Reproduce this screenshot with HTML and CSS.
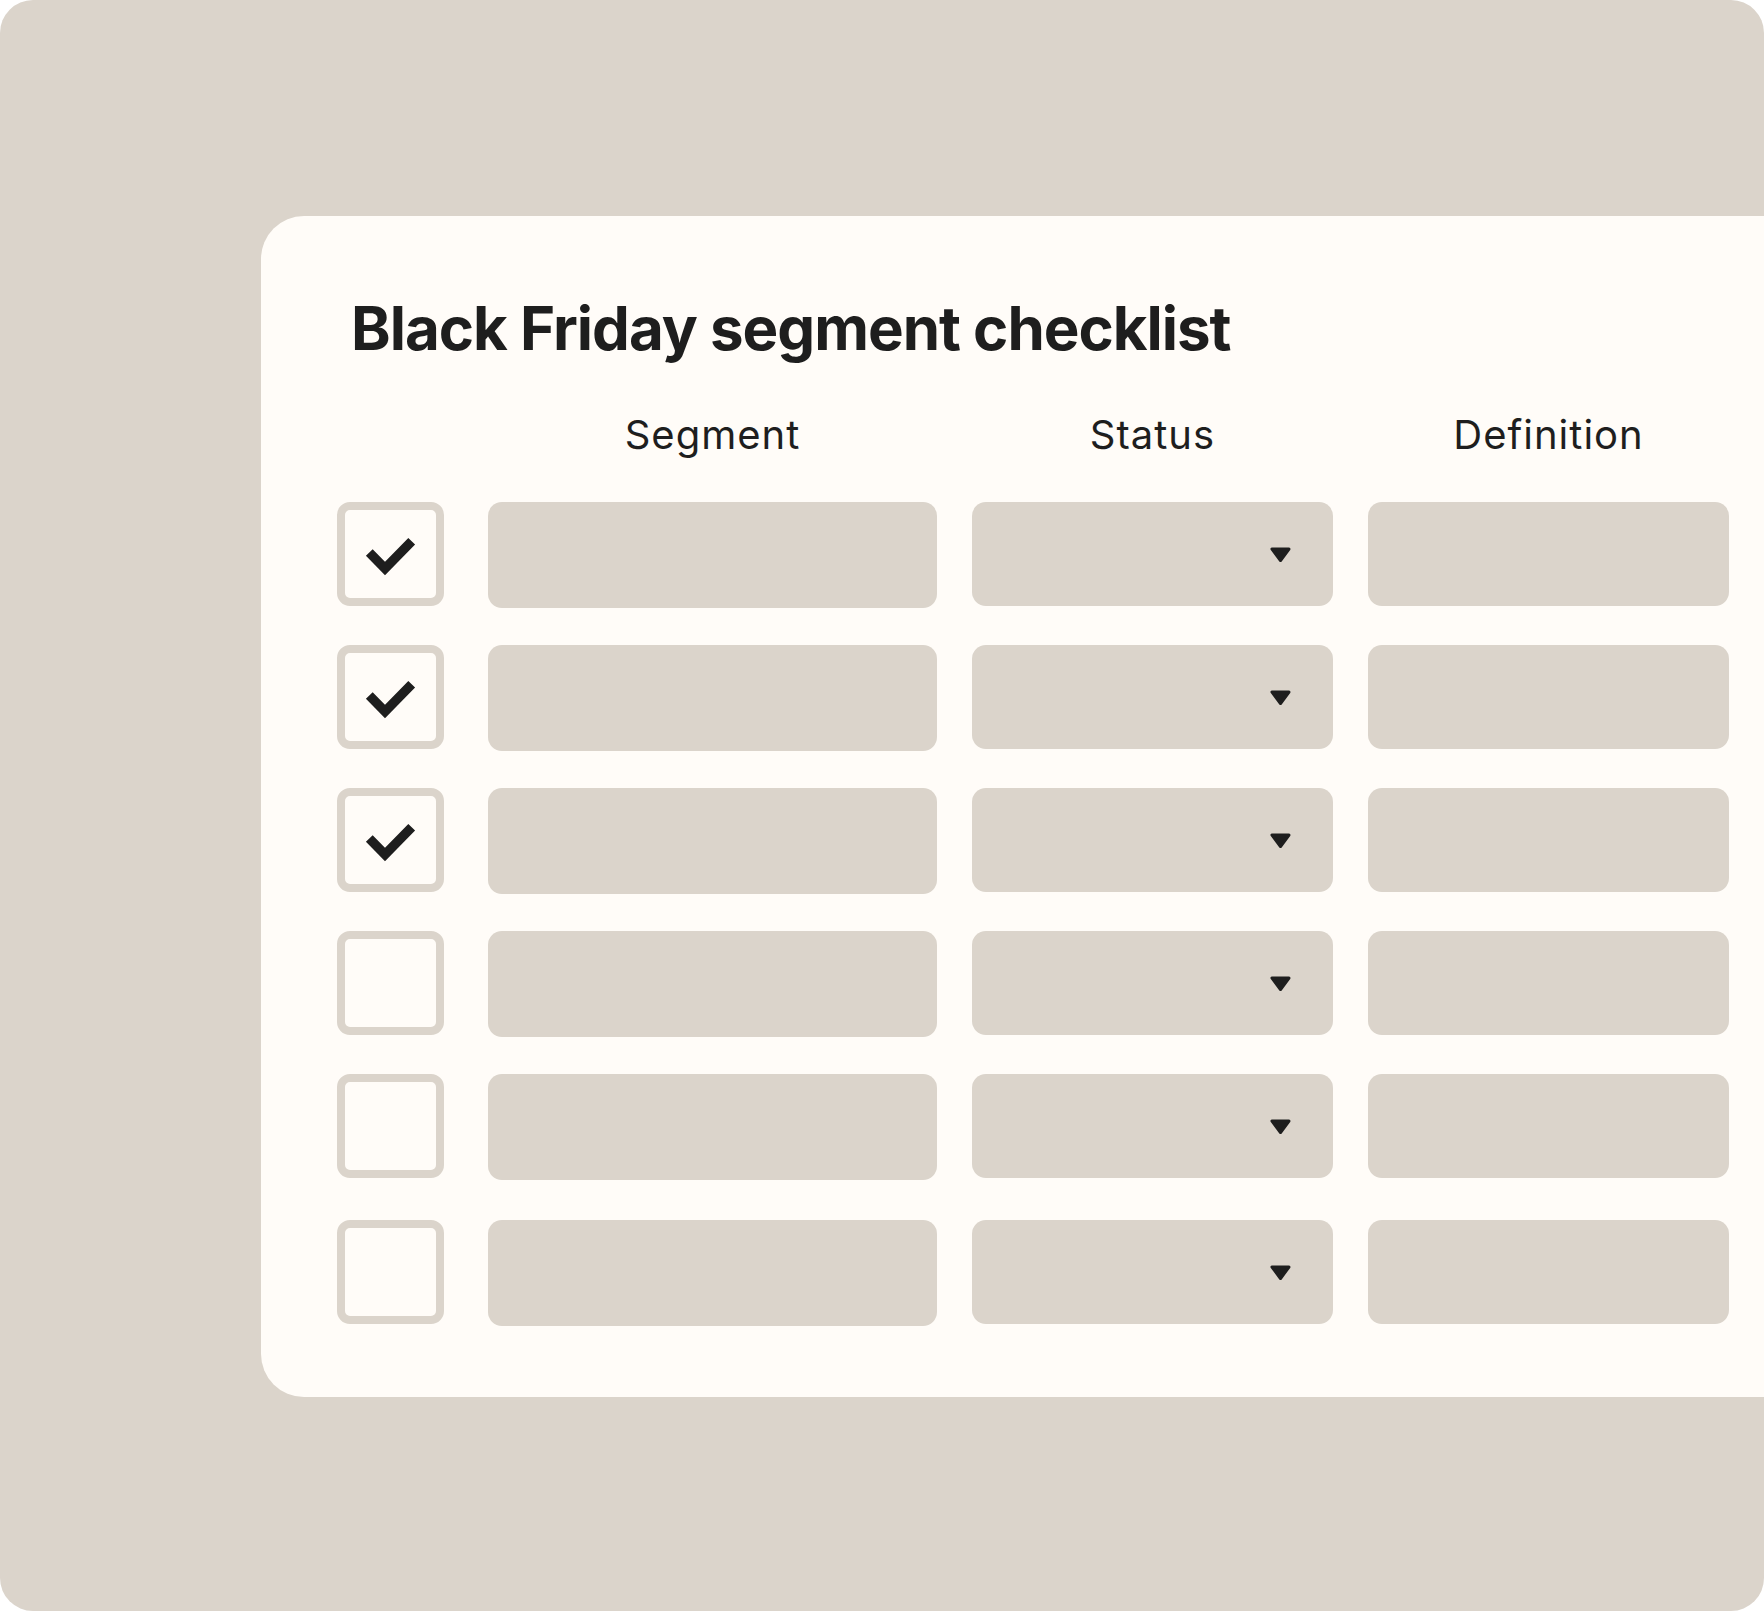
FILE: index.html
```html
<!DOCTYPE html>
<html lang="en">
<head>
<meta charset="utf-8">
<title>Black Friday segment checklist</title>
<link rel="stylesheet" href="styles.css">
</head>
<body>
<div class="frame">
  <section class="card">
    <h1 class="title">Black Friday segment checklist</h1>
    <div class="grid head">
      <div></div>
      <div class="col-label">Segment</div>
      <div class="col-label">Status</div>
      <div class="col-label">Definition</div>
    </div>
    <div class="rows">
      <div class="grid row">
        <div class="check"><svg viewBox="0 0 91 88" width="91" height="88"><path d="M24.3 42.5 L40 58.5 L66.7 31.2" /></svg></div>
        <div class="field field-seg"></div>
        <div class="field select"><svg viewBox="0 0 23 17" width="23" height="17"><polygon points="3,3 20,3 11.5,14.5" /></svg></div>
        <div class="field"></div>
      </div>
      <div class="grid row">
        <div class="check"><svg viewBox="0 0 91 88" width="91" height="88"><path d="M24.3 42.5 L40 58.5 L66.7 31.2" /></svg></div>
        <div class="field field-seg"></div>
        <div class="field select"><svg viewBox="0 0 23 17" width="23" height="17"><polygon points="3,3 20,3 11.5,14.5" /></svg></div>
        <div class="field"></div>
      </div>
      <div class="grid row">
        <div class="check"><svg viewBox="0 0 91 88" width="91" height="88"><path d="M24.3 42.5 L40 58.5 L66.7 31.2" /></svg></div>
        <div class="field field-seg"></div>
        <div class="field select"><svg viewBox="0 0 23 17" width="23" height="17"><polygon points="3,3 20,3 11.5,14.5" /></svg></div>
        <div class="field"></div>
      </div>
      <div class="grid row">
        <div class="check"></div>
        <div class="field field-seg"></div>
        <div class="field select"><svg viewBox="0 0 23 17" width="23" height="17"><polygon points="3,3 20,3 11.5,14.5" /></svg></div>
        <div class="field"></div>
      </div>
      <div class="grid row">
        <div class="check"></div>
        <div class="field field-seg"></div>
        <div class="field select"><svg viewBox="0 0 23 17" width="23" height="17"><polygon points="3,3 20,3 11.5,14.5" /></svg></div>
        <div class="field"></div>
      </div>
      <div class="grid row row-last">
        <div class="check"></div>
        <div class="field field-seg"></div>
        <div class="field select"><svg viewBox="0 0 23 17" width="23" height="17"><polygon points="3,3 20,3 11.5,14.5" /></svg></div>
        <div class="field"></div>
      </div>
    </div>
  </section>
</div>
</body>
</html>
```

FILE: styles.css
```css
* { box-sizing: border-box; }

html, body {
  margin: 0;
  padding: 0;
  background: #ffffff;
}

body {
  font-family: Inter, "Noto Sans", "Liberation Sans", sans-serif;
  color: #1e1e1e;
}

.frame {
  width: 1764px;
  height: 1611px;
  background: #dbd4cb;
  border-radius: 33px;
  padding: 216px 0 0 261px;
  overflow: hidden;
}

.card {
  background: #fffcf8;
  border-radius: 43px 0 0 43px;
  height: 1181px;
  padding: 82px 0 0 76px;
  display: flex;
  flex-direction: column;
}

.title {
  margin: 0 0 0 14px;
  font-size: 60px;
  line-height: 60px;
  font-weight: 700;
  letter-spacing: -0.017em;
  color: #1e1e1e;
}

.grid {
  display: grid;
  grid-template-columns: 116px 449px 361px 361px;
  column-gap: 35px;
}

.head {
  margin-top: 57px;
  height: 40px;
}

.col-label {
  font-size: 40px;
  line-height: 40px;
  font-weight: 400;
  letter-spacing: 1px;
  text-align: center;
  color: #1e1e1e;
}

.rows {
  margin-top: 47px;
  display: flex;
  flex-direction: column;
  gap: 39px;
}

.row {
  height: 104px;
}

.row-last {
  margin-top: 3px;
}

.check {
  width: 107px;
  height: 104px;
  border: 8px solid #dbd4cb;
  border-radius: 13px;
  display: flex;
}

.check svg {
  display: block;
}

.check path {
  fill: none;
  stroke: #1e1e1e;
  stroke-width: 9.5;
  stroke-linecap: butt;
  stroke-linejoin: miter;
}

.field {
  background: #dbd4cb;
  border-radius: 14px;
  height: 104px;
}

.field-seg {
  height: 106px;
}

.select {
  display: flex;
  align-items: center;
  justify-content: flex-end;
  padding-right: 41px;
}

.select svg {
  display: block;
}

.select polygon {
  fill: #1e1e1e;
  stroke: #1e1e1e;
  stroke-width: 3;
  stroke-linejoin: round;
}
```
